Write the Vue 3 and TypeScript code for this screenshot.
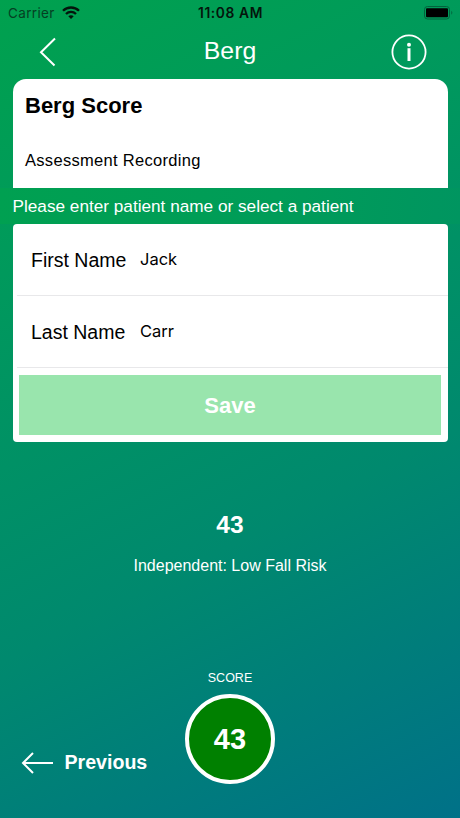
<script setup lang="ts">
import { ref } from 'vue'

interface Field {
  label: string
  value: string
}

const score = ref(43)
const fields = ref<Field[]>([
  { label: 'First Name', value: 'Jack' },
  { label: 'Last Name', value: 'Carr' },
])
</script>

<template>
  <main class="screen">
    <div class="status">
      <div class="carrier">
        <span>Carrier</span>
        <svg width="18" height="14" viewBox="0 0 18 14" fill="none" stroke="#04150c" stroke-width="2.3">
          <path d="M1 4.8C5.4.4 12.6.4 17 4.8" />
          <path d="M4 8C6.8 5.2 11.200 5.200 14 8" />
          <path d="M6.300 10.300C7.800 8.900 10.200 8.900 11.700 10.300L9 13Z" fill="#04150c" stroke="none" />
        </svg>
      </div>
      <time>11:08 AM</time>
      <svg class="battery" width="29" height="14" viewBox="0 0 29 14">
        <rect x=".5" y=".5" width="25" height="12.500" rx="3" fill="none" stroke="#02633d" />
        <rect x="2" y="2.200" width="22" height="9" rx="1" fill="#000" />
        <path d="M27.300 4.800v4q2-2 0-4" fill="#02633d" />
      </svg>
    </div>

    <header class="nav">
      <svg width="18" height="30" viewBox="0 0 18 30" fill="none" stroke="#fff" stroke-width="2">
        <path d="M16 1.500L2 15.200L15.500 28.500" />
      </svg>
      <h1>Berg</h1>
      <svg width="36" height="36" viewBox="0 0 36 36" fill="none" stroke="#fff">
        <circle cx="18" cy="18" r="16.600" stroke-width="1.800" />
        <circle cx="18" cy="10.800" r="2" fill="#fff" stroke="none" />
        <path d="M18 14.200V27" stroke-width="3" />
      </svg>
    </header>

    <section class="intro">
      <h2>Berg Score</h2>
      <p>Assessment Recording</p>
    </section>

    <section class="entry">
      <p class="hint">Please enter patient name or select a patient</p>
      <form class="card" @submit.prevent>
        <label v-for="field in fields" :key="field.label" class="row">
          <span class="label">{{ field.label }}</span>
          <span class="value">{{ field.value }}</span>
        </label>
        <button class="save" type="submit">Save</button>
      </form>
    </section>

    <section class="result">
      <strong>{{ score }}</strong>
      <p>Independent: Low Fall Risk</p>
    </section>

    <footer class="footer">
      <button class="previous" type="button">
        <svg width="33" height="22" viewBox="0 0 33 22" fill="none" stroke="#fff" stroke-width="2">
          <path d="M12 1L2 11L12 21M2 11H32" />
        </svg>
        <span>Previous</span>
      </button>
      <div class="total">
        <span>SCORE</span>
        <div class="disc">{{ score }}</div>
      </div>
    </footer>
  </main>
</template>

<style>
body {
  margin: 0;
}
</style>

<style scoped>
.screen {
  width: 460px;
  height: 818px;
  overflow: hidden;
  display: flex;
  flex-direction: column;
  box-sizing: border-box;
  color: #fff;
  font-family: 'Liberation Sans', Arial, sans-serif;
  background: linear-gradient(153deg, #00a14e 0%, #009a5b 24%, #00896e 63%, #007188 100%);
}
h1, h2, p {
  margin: 0;
  font-weight: 400;
}
button {
  border: 0;
  padding: 0;
  color: #fff;
  background: none;
  font-family: inherit;
  font-weight: 700;
}
.status {
  height: 26px;
  flex: none;
  display: grid;
  grid-template-columns: 1fr auto 1fr;
  align-items: center;
  padding: 0 7px 0 8px;
  box-sizing: border-box;
  color: #04150c;
  font-family: Inter, sans-serif;
  font-size: 13.500px;
}
.carrier {
  display: flex;
  align-items: center;
  gap: 7px;
  color: #053f23;
  letter-spacing: .35px;
}
.status time {
  font-weight: 600;
  font-size: 13.800px;
  letter-spacing: .6px;
}
.battery {
  justify-self: end;
  margin-bottom: 1px;
}
.nav {
  height: 53px;
  flex: none;
  display: grid;
  grid-template-columns: 36px 1fr 36px;
  align-items: center;
  padding: 0 33px 2px 39px;
  box-sizing: border-box;
}
.nav h1 {
  padding-right: 6px;
  font-size: 24.800px;
  line-height: 30px;
  padding-bottom: 2px;
  text-align: center;
}
.intro {
  height: 109px;
  flex: none;
  margin: 0 12.500px;
  padding: 14px 12.500px 0;
  box-sizing: border-box;
  border-radius: 13px 13px 0 0;
  background: #fff;
  color: #000;
}
.intro h2 {
  font-size: 22px;
  line-height: 26px;
  font-weight: 700;
}
.intro p {
  margin-top: 31px;
  font-size: 16.500px;
  line-height: 20px;
  letter-spacing: .3px;
}
.entry {
  flex: none;
}
.hint {
  height: 36px;
  padding-left: 12.500px;
  background: linear-gradient(97deg, #00a051, #009c58 60%, #009560);
  font-size: 17.200px;
  line-height: 36px;
}
.card {
  height: 217.500px;
  margin: 0 12.500px;
  overflow: hidden;
  border-radius: 4px;
  background: #fff;
  color: #000;
}
.row {
  height: 72px;
  box-sizing: border-box;
  display: flex;
  align-items: center;
  margin-left: 4px;
  padding-left: 14.500px;
  border-bottom: 1px solid #e8e8ea;
}
.label {
  width: 109px;
  padding-top: 2px;
  font-size: 19.500px;
}
.value {
  padding-bottom: 1px;
  font-family: Inter, sans-serif;
  font-size: 16.500px;
}
.save {
  display: block;
  width: 422px;
  height: 60px;
  margin: 7px auto 0;
  padding-top: 1px;
  background: #99e5ad;
  font-size: 22px;
}
.result {
  flex: none;
  padding-top: 68px;
  text-align: center;
}
.result strong {
  display: block;
  font-size: 24.500px;
  line-height: 30px;
}
.result p {
  margin-top: 16px;
  font-size: 16px;
  line-height: 20px;
}
.footer {
  flex: 1;
  display: grid;
  grid-template-columns: 164px 90px 1fr;
  align-items: end;
  padding: 0 0 34px 21px;
}
.previous {
  display: flex;
  align-items: center;
  gap: 10.500px;
  margin-bottom: 10px;
  font-size: 19.600px;
}
.total {
  display: flex;
  flex-direction: column;
  align-items: center;
  gap: 9px;
  font-size: 12.500px;
}
.disc {
  width: 90px;
  height: 90px;
  box-sizing: border-box;
  display: grid;
  place-items: center;
  border: 4px solid #fff;
  border-radius: 50%;
  background: #008000;
  font-size: 29px;
  font-weight: 700;
}
</style>
